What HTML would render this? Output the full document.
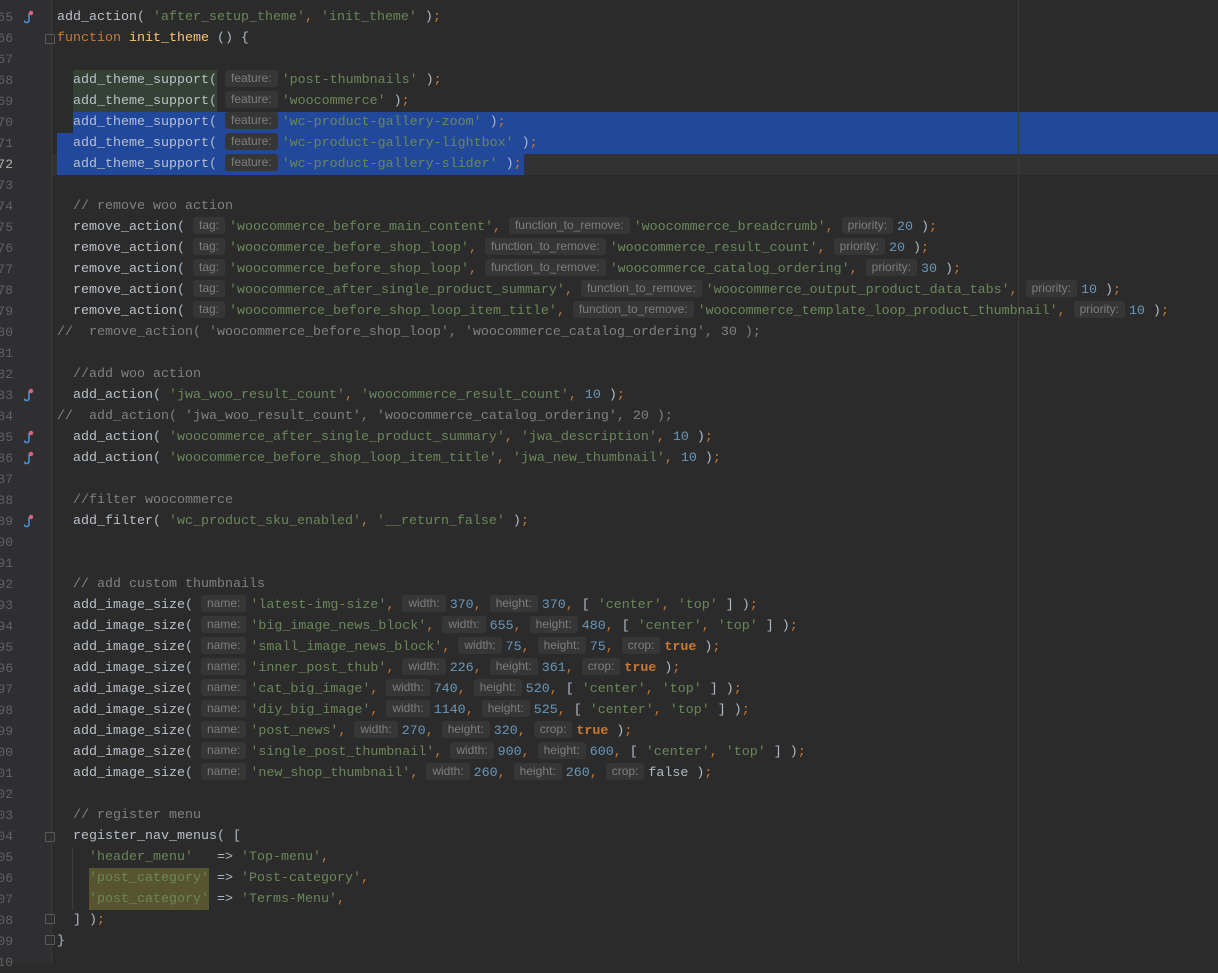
<!DOCTYPE html>
<html><head><meta charset="utf-8"><style>
html,body{margin:0;padding:0;}
body{width:1218px;height:963px;background:#2b2b2b;position:relative;overflow:hidden;font-family:"Liberation Mono",monospace;font-size:13.33px;color:#b0bac4;}
.gut{position:absolute;left:0;top:0;width:51px;height:963px;background:#2f2f31;border-right:1px solid #393939;}
.ln{position:absolute;left:-30px;width:43px;text-align:right;color:#5f6265;font-size:13px;line-height:21px;height:21px;}
.ln.cur{color:#b0b0b0;}
.l{position:absolute;left:57px;height:21px;line-height:21px;white-space:pre;}
.s{color:#6a8759}.n{color:#6897bb}.k{color:#cc7832}.p{color:#cc7832}.c{color:#808080}.y{color:#ffc66d}.f{color:#b9c0c8}.b{color:#cc7832;font-weight:bold}
.h{display:inline-block;font-family:"Liberation Sans",sans-serif;font-size:12px;color:#7e7e7e;background:#363636;height:17px;line-height:17px;padding:0 6px;margin-right:4px;border-radius:3px;vertical-align:1px;}
.bg{position:absolute;height:21px;}
.ic{position:absolute;left:22px;width:12px;height:14px;}
.fold{position:absolute;left:45px;width:8px;height:8px;border:1px solid #5a5a5a;border-radius:1px;}
</style></head><body>
<div class="gut"></div>
<div class="bg" style="top:154px;left:52px;width:1166px;background:#323232"></div>
<div class="bg" style="top:70px;left:73px;width:144px;background:#344235"></div>
<div class="bg" style="top:91px;left:73px;width:144px;background:#344235"></div>
<div class="bg" style="top:112px;left:73px;width:1145px;background:#21489b"></div>
<div class="bg" style="top:133px;left:57px;width:1161px;background:#21489b"></div>
<div class="bg" style="top:154px;left:57px;width:467px;background:#21489b"></div>
<div class="bg" style="top:868px;left:89px;width:120px;background:#57552f"></div>
<div class="bg" style="top:889px;left:89px;width:120px;background:#57552f"></div>
<div style="position:absolute;left:1018px;top:0;width:1px;height:963px;background:#3a3a3a"></div>
<div style="position:absolute;left:72px;top:847px;width:1px;height:63px;background:#3c3c3c"></div>

<div class="ln" style="top:7px">65</div><div class="ln" style="top:28px">66</div><div class="ln" style="top:49px">67</div><div class="ln" style="top:70px">68</div><div class="ln" style="top:91px">69</div><div class="ln" style="top:112px">70</div><div class="ln" style="top:133px">71</div><div class="ln cur" style="top:154px">72</div><div class="ln" style="top:175px">73</div><div class="ln" style="top:196px">74</div><div class="ln" style="top:217px">75</div><div class="ln" style="top:238px">76</div><div class="ln" style="top:259px">77</div><div class="ln" style="top:280px">78</div><div class="ln" style="top:301px">79</div><div class="ln" style="top:322px">80</div><div class="ln" style="top:343px">81</div><div class="ln" style="top:364px">82</div><div class="ln" style="top:385px">83</div><div class="ln" style="top:406px">84</div><div class="ln" style="top:427px">85</div><div class="ln" style="top:448px">86</div><div class="ln" style="top:469px">87</div><div class="ln" style="top:490px">88</div><div class="ln" style="top:511px">89</div><div class="ln" style="top:532px">90</div><div class="ln" style="top:553px">91</div><div class="ln" style="top:574px">92</div><div class="ln" style="top:595px">93</div><div class="ln" style="top:616px">94</div><div class="ln" style="top:637px">95</div><div class="ln" style="top:658px">96</div><div class="ln" style="top:679px">97</div><div class="ln" style="top:700px">98</div><div class="ln" style="top:721px">99</div><div class="ln" style="top:742px">100</div><div class="ln" style="top:763px">101</div><div class="ln" style="top:784px">102</div><div class="ln" style="top:805px">103</div><div class="ln" style="top:826px">104</div><div class="ln" style="top:847px">105</div><div class="ln" style="top:868px">106</div><div class="ln" style="top:889px">107</div><div class="ln" style="top:910px">108</div><div class="ln" style="top:931px">109</div><div class="ln" style="top:952px">110</div>

<svg class="ic" style="top:10px" viewBox="0 0 12 14"><path d="M7 3 L7 10 Q7 12.5 4.5 12.5 Q2.5 12.5 2.5 10.5" fill="none" stroke="#4a90d0" stroke-width="1.6"/><circle cx="9" cy="3" r="2.2" fill="#e0607a"/></svg>
<svg class="ic" style="top:388px" viewBox="0 0 12 14"><path d="M7 3 L7 10 Q7 12.5 4.5 12.5 Q2.5 12.5 2.5 10.5" fill="none" stroke="#4a90d0" stroke-width="1.6"/><circle cx="9" cy="3" r="2.2" fill="#e0607a"/></svg>
<svg class="ic" style="top:430px" viewBox="0 0 12 14"><path d="M7 3 L7 10 Q7 12.5 4.5 12.5 Q2.5 12.5 2.5 10.5" fill="none" stroke="#4a90d0" stroke-width="1.6"/><circle cx="9" cy="3" r="2.2" fill="#e0607a"/></svg>
<svg class="ic" style="top:451px" viewBox="0 0 12 14"><path d="M7 3 L7 10 Q7 12.5 4.5 12.5 Q2.5 12.5 2.5 10.5" fill="none" stroke="#4a90d0" stroke-width="1.6"/><circle cx="9" cy="3" r="2.2" fill="#e0607a"/></svg>
<svg class="ic" style="top:514px" viewBox="0 0 12 14"><path d="M7 3 L7 10 Q7 12.5 4.5 12.5 Q2.5 12.5 2.5 10.5" fill="none" stroke="#4a90d0" stroke-width="1.6"/><circle cx="9" cy="3" r="2.2" fill="#e0607a"/></svg>
<div class="fold" style="top:34px"></div><div class="fold" style="top:832px"></div><div class="fold" style="top:914px"></div><div class="fold" style="top:935px"></div>

<div class="l" style="top:7px"><span class="f">add_action</span>( <span class="s">'after_setup_theme'</span><span class="p">,</span> <span class="s">'init_theme'</span> )<span class="p">;</span></div>
<div class="l" style="top:28px"><span class="k">function</span> <span class="y">init_theme</span> () {</div>
<div class="l" style="top:70px">  <span class="f">add_theme_support</span>( <span class="h">feature:</span><span class="s">'post-thumbnails'</span> )<span class="p">;</span></div>
<div class="l" style="top:91px">  <span class="f">add_theme_support</span>( <span class="h">feature:</span><span class="s">'woocommerce'</span> )<span class="p">;</span></div>
<div class="l" style="top:112px">  <span class="f">add_theme_support</span>( <span class="h">feature:</span><span class="s">'wc-product-gallery-zoom'</span> )<span class="p">;</span></div>
<div class="l" style="top:133px">  <span class="f">add_theme_support</span>( <span class="h">feature:</span><span class="s">'wc-product-gallery-lightbox'</span> )<span class="p">;</span></div>
<div class="l" style="top:154px">  <span class="f">add_theme_support</span>( <span class="h">feature:</span><span class="s">'wc-product-gallery-slider'</span> )<span class="p">;</span></div>
<div class="l" style="top:196px">  <span class="c">// remove woo action</span></div>
<div class="l" style="top:217px">  <span class="f">remove_action</span>( <span class="h">tag:</span><span class="s">'woocommerce_before_main_content'</span><span class="p">,</span> <span class="h">function_to_remove:</span><span class="s">'woocommerce_breadcrumb'</span><span class="p">,</span> <span class="h">priority:</span><span class="n">20</span> )<span class="p">;</span></div>
<div class="l" style="top:238px">  <span class="f">remove_action</span>( <span class="h">tag:</span><span class="s">'woocommerce_before_shop_loop'</span><span class="p">,</span> <span class="h">function_to_remove:</span><span class="s">'woocommerce_result_count'</span><span class="p">,</span> <span class="h">priority:</span><span class="n">20</span> )<span class="p">;</span></div>
<div class="l" style="top:259px">  <span class="f">remove_action</span>( <span class="h">tag:</span><span class="s">'woocommerce_before_shop_loop'</span><span class="p">,</span> <span class="h">function_to_remove:</span><span class="s">'woocommerce_catalog_ordering'</span><span class="p">,</span> <span class="h">priority:</span><span class="n">30</span> )<span class="p">;</span></div>
<div class="l" style="top:280px">  <span class="f">remove_action</span>( <span class="h">tag:</span><span class="s">'woocommerce_after_single_product_summary'</span><span class="p">,</span> <span class="h">function_to_remove:</span><span class="s">'woocommerce_output_product_data_tabs'</span><span class="p">,</span> <span class="h">priority:</span><span class="n">10</span> )<span class="p">;</span></div>
<div class="l" style="top:301px">  <span class="f">remove_action</span>( <span class="h">tag:</span><span class="s">'woocommerce_before_shop_loop_item_title'</span><span class="p">,</span> <span class="h">function_to_remove:</span><span class="s">'woocommerce_template_loop_product_thumbnail'</span><span class="p">,</span> <span class="h">priority:</span><span class="n">10</span> )<span class="p">;</span></div>
<div class="l c" style="top:322px">//  remove_action( 'woocommerce_before_shop_loop', 'woocommerce_catalog_ordering', 30 );</div>
<div class="l" style="top:364px">  <span class="c">//add woo action</span></div>
<div class="l" style="top:385px">  <span class="f">add_action</span>( <span class="s">'jwa_woo_result_count'</span><span class="p">,</span> <span class="s">'woocommerce_result_count'</span><span class="p">,</span> <span class="n">10</span> )<span class="p">;</span></div>
<div class="l c" style="top:406px">//  add_action( 'jwa_woo_result_count', 'woocommerce_catalog_ordering', 20 );</div>
<div class="l" style="top:427px">  <span class="f">add_action</span>( <span class="s">'woocommerce_after_single_product_summary'</span><span class="p">,</span> <span class="s">'jwa_description'</span><span class="p">,</span> <span class="n">10</span> )<span class="p">;</span></div>
<div class="l" style="top:448px">  <span class="f">add_action</span>( <span class="s">'woocommerce_before_shop_loop_item_title'</span><span class="p">,</span> <span class="s">'jwa_new_thumbnail'</span><span class="p">,</span> <span class="n">10</span> )<span class="p">;</span></div>
<div class="l" style="top:490px">  <span class="c">//filter woocommerce</span></div>
<div class="l" style="top:511px">  <span class="f">add_filter</span>( <span class="s">'wc_product_sku_enabled'</span><span class="p">,</span> <span class="s">'__return_false'</span> )<span class="p">;</span></div>
<div class="l" style="top:574px">  <span class="c">// add custom thumbnails</span></div>
<div class="l" style="top:595px">  <span class="f">add_image_size</span>( <span class="h">name:</span><span class="s">'latest-img-size'</span><span class="p">,</span> <span class="h">width:</span><span class="n">370</span><span class="p">,</span> <span class="h">height:</span><span class="n">370</span><span class="p">,</span> [ <span class="s">'center'</span><span class="p">,</span> <span class="s">'top'</span> ] )<span class="p">;</span></div>
<div class="l" style="top:616px">  <span class="f">add_image_size</span>( <span class="h">name:</span><span class="s">'big_image_news_block'</span><span class="p">,</span> <span class="h">width:</span><span class="n">655</span><span class="p">,</span> <span class="h">height:</span><span class="n">480</span><span class="p">,</span> [ <span class="s">'center'</span><span class="p">,</span> <span class="s">'top'</span> ] )<span class="p">;</span></div>
<div class="l" style="top:637px">  <span class="f">add_image_size</span>( <span class="h">name:</span><span class="s">'small_image_news_block'</span><span class="p">,</span> <span class="h">width:</span><span class="n">75</span><span class="p">,</span> <span class="h">height:</span><span class="n">75</span><span class="p">,</span> <span class="h">crop:</span><span class="b">true</span> )<span class="p">;</span></div>
<div class="l" style="top:658px">  <span class="f">add_image_size</span>( <span class="h">name:</span><span class="s">'inner_post_thub'</span><span class="p">,</span> <span class="h">width:</span><span class="n">226</span><span class="p">,</span> <span class="h">height:</span><span class="n">361</span><span class="p">,</span> <span class="h">crop:</span><span class="b">true</span> )<span class="p">;</span></div>
<div class="l" style="top:679px">  <span class="f">add_image_size</span>( <span class="h">name:</span><span class="s">'cat_big_image'</span><span class="p">,</span> <span class="h">width:</span><span class="n">740</span><span class="p">,</span> <span class="h">height:</span><span class="n">520</span><span class="p">,</span> [ <span class="s">'center'</span><span class="p">,</span> <span class="s">'top'</span> ] )<span class="p">;</span></div>
<div class="l" style="top:700px">  <span class="f">add_image_size</span>( <span class="h">name:</span><span class="s">'diy_big_image'</span><span class="p">,</span> <span class="h">width:</span><span class="n">1140</span><span class="p">,</span> <span class="h">height:</span><span class="n">525</span><span class="p">,</span> [ <span class="s">'center'</span><span class="p">,</span> <span class="s">'top'</span> ] )<span class="p">;</span></div>
<div class="l" style="top:721px">  <span class="f">add_image_size</span>( <span class="h">name:</span><span class="s">'post_news'</span><span class="p">,</span> <span class="h">width:</span><span class="n">270</span><span class="p">,</span> <span class="h">height:</span><span class="n">320</span><span class="p">,</span> <span class="h">crop:</span><span class="b">true</span> )<span class="p">;</span></div>
<div class="l" style="top:742px">  <span class="f">add_image_size</span>( <span class="h">name:</span><span class="s">'single_post_thumbnail'</span><span class="p">,</span> <span class="h">width:</span><span class="n">900</span><span class="p">,</span> <span class="h">height:</span><span class="n">600</span><span class="p">,</span> [ <span class="s">'center'</span><span class="p">,</span> <span class="s">'top'</span> ] )<span class="p">;</span></div>
<div class="l" style="top:763px">  <span class="f">add_image_size</span>( <span class="h">name:</span><span class="s">'new_shop_thumbnail'</span><span class="p">,</span> <span class="h">width:</span><span class="n">260</span><span class="p">,</span> <span class="h">height:</span><span class="n">260</span><span class="p">,</span> <span class="h">crop:</span>false )<span class="p">;</span></div>
<div class="l" style="top:805px">  <span class="c">// register menu</span></div>
<div class="l" style="top:826px">  <span class="f">register_nav_menus</span>( [</div>
<div class="l" style="top:847px">    <span class="s">'header_menu'</span>   =&gt; <span class="s">'Top-menu'</span><span class="p">,</span></div>
<div class="l" style="top:868px">    <span class="s">'post_category'</span> =&gt; <span class="s">'Post-category'</span><span class="p">,</span></div>
<div class="l" style="top:889px">    <span class="s">'post_category'</span> =&gt; <span class="s">'Terms-Menu'</span><span class="p">,</span></div>
<div class="l" style="top:910px">  ] )<span class="p">;</span></div>
<div class="l" style="top:931px">}</div>
</body></html>
